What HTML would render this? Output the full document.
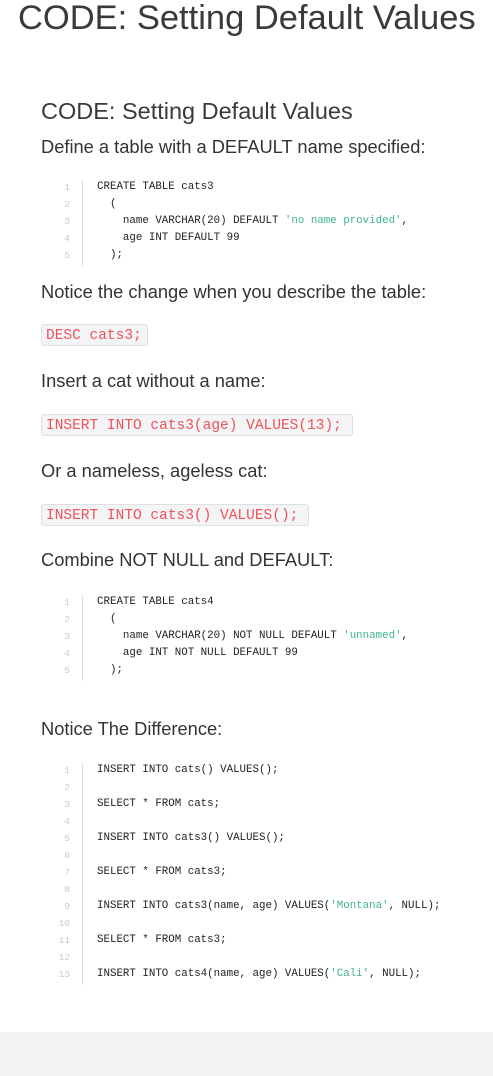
<!DOCTYPE html>
<html><head><meta charset="utf-8"><style>
body{margin:0;width:493px;height:1076px;position:relative;background:#fff;overflow:hidden;font-family:"Liberation Sans",sans-serif;color:#333}
.a{position:absolute;white-space:pre}
.h{color:#3a3a3a}
.t{font-size:18.3px;line-height:18px;color:#333}
.c{font-family:"Liberation Mono",monospace;font-size:10.8px;line-height:17px;color:#222}
.n{font-family:"Liberation Mono",monospace;font-size:9.5px;line-height:17px;color:#c8c8c8;text-align:right;width:10px}
.s{color:#3fb58a}
.d{position:absolute;width:1px;background:#ddd;left:82px}
.k{position:absolute;left:41px;height:22px;background:#f3f4f6;border:1px solid #e0e0e0;border-radius:3px;font-family:"Liberation Mono",monospace;font-size:14.5px;line-height:22px;color:#f0525a;padding-left:4px;box-sizing:border-box;white-space:pre}
</style></head><body>
<div class="a h" style="left:18px;top:-2px;font-size:34.5px;line-height:40px">CODE: Setting Default Values</div>
<div class="a h" style="left:41px;top:98px;font-size:23.5px;line-height:26px">CODE: Setting Default Values</div>
<div class="a t" style="left:41px;top:138px">Define a table with a DEFAULT name specified:</div>

<div class="a n" style="left:60px;top:179px">1
2
3
4
5</div>
<div class="d" style="top:180px;height:86px"></div>
<div class="a c" style="left:97px;top:179px">CREATE TABLE cats3
  (
    name VARCHAR(20) DEFAULT <span class="s">'no name provided'</span>,
    age INT DEFAULT 99
  );</div>

<div class="a t" style="left:41px;top:283px">Notice the change when you describe the table:</div>
<div class="k" style="top:324px;width:107px">DESC cats3;</div>
<div class="a t" style="left:41px;top:372px">Insert a cat without a name:</div>
<div class="k" style="top:414px;width:312px">INSERT INTO cats3(age) VALUES(13);</div>
<div class="a t" style="left:41px;top:462px">Or a nameless, ageless cat:</div>
<div class="k" style="top:504px;width:268px">INSERT INTO cats3() VALUES();</div>
<div class="a t" style="left:41px;top:551px">Combine NOT NULL and DEFAULT:</div>

<div class="a n" style="left:60px;top:594px">1
2
3
4
5</div>
<div class="d" style="top:595px;height:86px"></div>
<div class="a c" style="left:97px;top:594px">CREATE TABLE cats4
  (
    name VARCHAR(20) NOT NULL DEFAULT <span class="s">'unnamed'</span>,
    age INT NOT NULL DEFAULT 99
  );</div>

<div class="a t" style="left:41px;top:720px">Notice The Difference:</div>

<div class="a n" style="left:56px;top:762px;width:14px">1
2
3
4
5
6
7
8
9
10
11
12
13</div>
<div class="d" style="top:763px;height:222px"></div>
<div class="a c" style="left:97px;top:762px">INSERT INTO cats() VALUES();

SELECT * FROM cats;

INSERT INTO cats3() VALUES();

SELECT * FROM cats3;

INSERT INTO cats3(name, age) VALUES(<span class="s">'Montana'</span>, NULL);

SELECT * FROM cats3;

INSERT INTO cats4(name, age) VALUES(<span class="s">'Cali'</span>, NULL);</div>

<div style="position:absolute;left:0;top:1032px;width:493px;height:44px;background:#f2f2f4"></div>
</body></html>
